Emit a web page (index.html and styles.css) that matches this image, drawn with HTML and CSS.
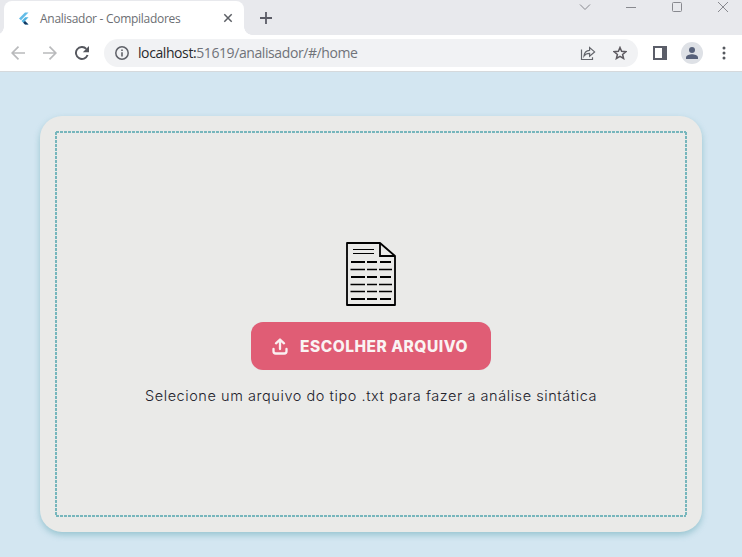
FILE: index.html
```
<!DOCTYPE html>
<html lang="pt-BR">
<head>
<meta charset="utf-8">
<title>Analisador - Compiladores</title>
<link rel="stylesheet" href="styles.css">
</head>
<body>
<div class="browser">
  <header class="tabs">
    <div class="tab">
      <svg class="favicon" width="12" height="13" viewBox="0 0 12 13"><path d="M0 6.500 6 .500H9.500L2 8.300Z" fill="#62bce8"/><path d="M2.500 9 6.200 5.300H9.500L6 9l3.500 3.500H6Z" fill="#54b4e0"/><path d="m4.300 10.800 1.700-1.700 3.500 3.400H6Z" fill="#17375d"/></svg>
      <span class="tab-title">Analisador - Compiladores</span>
      <svg class="tab-close" width="10" height="10" viewBox="0 0 10 10"><path d="m1.300 1.300 7.400 7.400m0-7.400L1.300 8.700" stroke="#5b5e64" stroke-width="1.500"/></svg>
    </div>
    <svg class="new-tab" width="12" height="12" viewBox="0 0 12 12"><path d="M6 0v12M0 6h12" stroke="#5b5c66" stroke-width="1.800"/></svg>
    <div class="window-buttons">
      <svg width="12" height="14" viewBox="0 0 12 14"><path d="m1 4.500 5 5 5-5"/></svg>
      <svg width="12" height="14" viewBox="0 0 12 14"><path d="M1 7.500h10"/></svg>
      <svg width="12" height="14" viewBox="0 0 12 14"><rect x="1.500" y="2.500" width="9" height="9" rx="1"/></svg>
      <svg width="12" height="14" viewBox="0 0 12 14"><path d="m1 2 10 10m0-10L1 12"/></svg>
    </div>
  </header>
  <nav class="toolbar">
    <svg class="back" width="14" height="14" viewBox="0 0 14 14"><path d="M14 7H1m6.500-6.300L1.200 7l6.300 6.300"/></svg>
    <svg class="forward" width="14" height="14" viewBox="0 0 14 14"><path d="M0 7h13M6.500.7 12.800 7l-6.300 6.300"/></svg>
    <svg class="reload" width="14" height="14" viewBox="0 0 14 14"><path d="M12.600 9A6 6 0 1 1 11.300 2.800" fill="none" stroke="#55575e" stroke-width="1.900"/><path d="M14 0v6.200H7.800Z" fill="#55575e"/></svg>
    <div class="address">
      <svg class="info" width="14" height="14" viewBox="0 0 14 14"><circle cx="7" cy="7" r="6.200" fill="none" stroke="#5f6168" stroke-width="1.500"/><path d="M7 6.200v4.300M7 3.400v1.700" stroke="#5f6168" stroke-width="1.600"/></svg>
      <span class="url"><b>localhost:</b>51619/analisador/#/home</span>
      <svg class="share" width="16" height="14" viewBox="0 0 16 14"><path d="M1.500 3.500v10h11v-2.300M4 10C4.300 6.200 6.300 4.500 9.600 4.300V1.500l5 4.400-5 4.300V7.300C7 7.300 5.200 8.200 4 10Z" fill="none" stroke="#63656b" stroke-width="1.200"/></svg>
      <svg class="star" width="14" height="14" viewBox="0 0 14 14"><path d="m7 1.500 1.600 3.800 4.200.4-3.200 2.700 1 4.100L7 10.300l-3.600 2.200 1-4.100-3.200-2.700 4.200-.4Z" fill="none" stroke="#5d5a60" stroke-width="1.500"/></svg>
    </div>
    <svg class="panel" width="14" height="14" viewBox="0 0 14 14"><path d="M0 0h14v14H0ZM2 2v10h7V2Z" fill="#5b5e69" fill-rule="evenodd"/></svg>
    <svg class="profile" width="22" height="22" viewBox="0 0 22 22"><circle cx="11" cy="11" r="11" fill="#dee1e6"/><circle cx="11" cy="8" r="3" fill="#57617a"/><path d="M5 17v-1.700c0-2 3.800-3.100 6-3.100s6 1.100 6 3.100V17Z" fill="#57617a"/></svg>
    <svg class="more" width="4" height="14" viewBox="0 0 4 14" fill="#55585e"><circle cx="2" cy="2" r="1.500"/><circle cx="2" cy="7" r="1.500"/><circle cx="2" cy="12" r="1.500"/></svg>
  </nav>
  <main class="page">
    <section class="card">
      <div class="dropzone">
        <svg class="document" width="52" height="66" viewBox="0 0 52 66" fill="none" stroke="#000"><path d="M2 2H35L50 15V64H2Z" stroke-width="1.800" stroke-linejoin="round"/><path d="M35 2v13h15" stroke-width="1.800"/><path d="M8 8.500h21M8 12.500h21" stroke-width="1.200"/><path d="M6 21h14m2 0h10m3 0h11M6 36h14m2 0h10m3 0h11M6 58h14m2 0h10m3 0h11" stroke-width="2"/><path d="M5.500 28.500h14.500m2 0h10m2 0h13M5.500 43.500h14.500m2 0h10m2 0h13M5.500 50.500h14.500m2 0h10m2 0h13" stroke-width="1.300"/></svg>
        <button class="choose">
          <svg width="16" height="17" viewBox="0 0 16 17" fill="none" stroke="#faf0f1" stroke-width="2.300" stroke-linecap="round" stroke-linejoin="round"><path d="M8 11V2M4 5.300l4-3.800 4 3.800M1.500 11v2.300c0 1.400.8 2.200 2.200 2.200h8.600c1.400 0 2.200-.8 2.200-2.200V11"/></svg>
          <span>ESCOLHER ARQUIVO</span>
        </button>
        <p class="hint">Selecione um arquivo do tipo .txt para fazer a análise sintática</p>
      </div>
    </section>
  </main>
</div>
</body>
</html>
```
FILE: styles.css
```
* { box-sizing: border-box; }
body { margin: 0; overflow: hidden; }
svg { display: block; flex: none; }
.browser { width: 742px; height: 557px; display: flex; flex-direction: column; background: #d3e6f1; }
.tabs { height: 35px; background: #e8e9ed; display: flex; padding-left: 4px; }
.tab { position: relative; width: 240px; height: 34px; margin-top: 1px; background: #fff; border-radius: 8px 8px 0 0; display: flex; align-items: center; padding: 0 11px 0 15px; font: 12px "Open Sans", sans-serif; color: #6c6e73; }
.tab::before, .tab::after { content: ""; position: absolute; bottom: 0; width: 8px; height: 8px; }
.tab::before { left: -8px; background: radial-gradient(circle at 0 0, #e8e9ed 7.500px, #fff 8px); }
.tab::after { right: -8px; background: radial-gradient(circle at 100% 0, #e8e9ed 7.500px, #fff 8px); }
.tab-title { margin-left: 9px; white-space: nowrap; letter-spacing: -0.280px; }
.tab-close { margin-left: auto; }
.new-tab { margin: 12px 0 0 16px; }
.window-buttons { margin: 0 13px 0 auto; display: flex; gap: 34px; fill: none; stroke: #88898f; stroke-width: 1; }
.toolbar { height: 37px; background: #fff; border-bottom: 1px solid #d5d9dc; display: flex; align-items: center; padding: 0 16px 0 11px; }
.back, .forward { fill: none; stroke: #b9babc; stroke-width: 1.700; }
.forward { margin-left: 18px; }
.reload { margin-left: 18px; }
.address { margin-left: 15px; width: 534px; height: 28px; background: #f1f2f4; border-radius: 14px; display: flex; align-items: center; padding: 0 11px; }
.url { margin: 0 0 2px 9px; font: 14px "Open Sans", sans-serif; color: #707379; white-space: nowrap; letter-spacing: -0.410px; }
.url b { font-weight: 400; color: #292a2d; }
.share { margin-left: auto; }
.star { margin-left: 17px; }
.panel { margin-left: 15px; }
.profile { margin-left: 14px; }
.more { margin-left: auto; }
.page { flex: 1; padding: 44px 40px 25px; display: flex; }
.card { flex: 1; padding: 15px; border-radius: 22px; background: #eaeae8; box-shadow: 0 3px 6px rgba(65, 148, 160, .4); }
.dropzone {
  width: 632px; height: 386px; padding-top: 110px; display: flex; flex-direction: column; align-items: center;
  background:
    repeating-linear-gradient(90deg, #77b6bc 0 3px, #eaeae8 3px 4px) 1px 0 / 630px 2px no-repeat,
    repeating-linear-gradient(90deg, #77b6bc 0 3px, #eaeae8 3px 4px) 1px 100% / 630px 2px no-repeat,
    repeating-linear-gradient(#77b6bc 0 3px, #eaeae8 3px 4px) 0 1px / 2px 384px no-repeat,
    repeating-linear-gradient(#77b6bc 0 3px, #eaeae8 3px 4px) 100% 1px / 2px 384px no-repeat;
}
.choose { width: 240px; height: 48px; margin-top: 15px; padding: 0 0 0 21px; border: 0; border-radius: 12px; background: #e05d75; color: #faf3f3; display: flex; align-items: center; font: 800 15.500px Inter, sans-serif; letter-spacing: .500px; box-shadow: 0 0 1px #dbe3e6; }
.choose span { margin-left: 12px; white-space: nowrap; }
.hint { margin: 16px 0 0; font: 300 14.500px/20px Inter, sans-serif; letter-spacing: .560px; color: #22222c; white-space: nowrap; }
```
